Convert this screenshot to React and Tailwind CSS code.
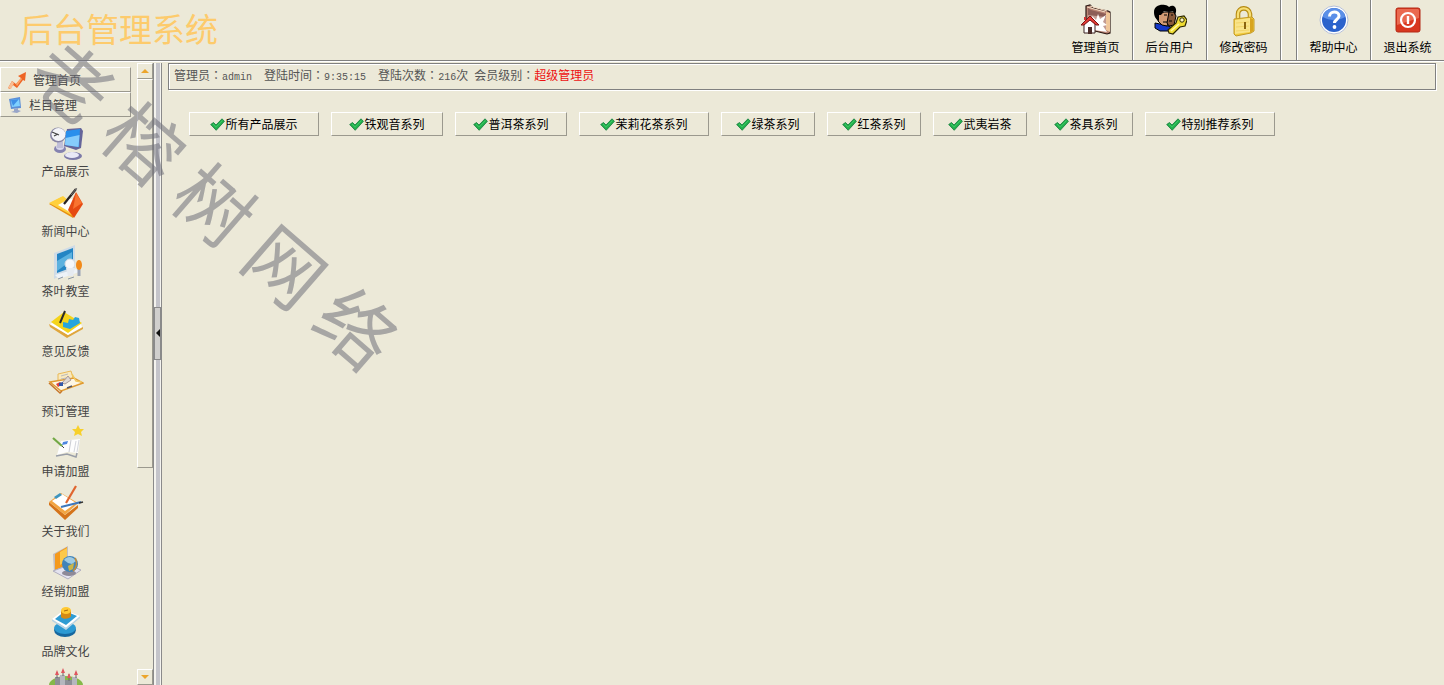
import React, { useState } from 'react';
import clsx from 'clsx';

const HomeFolderIcon = () => (
  <svg viewBox="0 0 34 34" className="w-[34px] h-[34px]">
    <path d="M7 3l4-1 3 3 15 3 2 1v21l-3 1-12-3L7 22z" fill="#b98474" stroke="#2b1712" strokeWidth="1.2" />
    <path d="M9 5l3 2 15 4v18L9 22z" fill="#8d5e57" />
    <path d="M9 12l18 2v14L9 22z" fill="#c39c93" />
    <path d="M27 9l4 1v19l-4-2z" fill="#f0c79a" />
    <path d="M8 4l18 5M11 3l17 5" stroke="#f4dcc4" />
    <path d="M14 20l-1-7 4 4 2-6 2 5 6-4-3 7 4 3-4 1 4 6-13-2z" fill="#fff" />
    <path d="M5 21v9h11v-9l-5-5z" fill="#fff" stroke="#3b2222" />
    <path d="M2 22l9-9 9 9h-3l-6-5-6 5z" fill="#e23b35" stroke="#7a1414" />
    <path d="M9 24h4v7H9z" fill="#4b2b28" />
    <path d="M5 14h2v3H5z" fill="#c33" />
  </svg>
);

const UserKeyIcon = () => (
  <svg viewBox="0 0 34 34" className="w-[34px] h-[34px]">
    <path d="M2 20l5 1 8 2 5 2v3H7l-5-3z" fill="#1438c8" stroke="#000" />
    <path d="M5 12l6-3 5 0 1 7-3 7-5-1-4-4z" fill="#d39c74" stroke="#000" />
    <path d="M16 9l5 0 2 4-2 9-5 1-2-3z" fill="#8a5a3a" stroke="#000" />
    <path d="M1 9c0-6 6-8 11-7 2 0 3 1 4 2 4-3 8 0 7 5l-1 3-2-4-4 1-5-1-3 4-2 0 0 6C2 16 1 12 1 9z" fill="#000" />
    <path d="M11 12h3M18 12h2M10 19l4 0M16 18h3" stroke="#000" strokeWidth="1.200" />
    <path d="M25 14l6-1 3 4-2 6-5 1-7 7-4-1-1-3 8-7z" fill="#efdc33" stroke="#2b2600" strokeWidth="1.2" />
    <path d="M18 28l8-7" stroke="#fff9a5" strokeWidth="1.5" />
    <circle cx="29" cy="17" r="2.2" fill="#fff8c0" stroke="#2b2600" />
  </svg>
);

const LockIcon = () => (
  <svg viewBox="0 0 34 34" className="w-[34px] h-[34px]">
    <path d="M11 17v-6c0-7 11-8 12 0v6" fill="none" stroke="#b58a12" strokeWidth="4.6" />
    <path d="M11 17v-6c0-7 11-8 12 0v6" fill="none" stroke="#f8df74" strokeWidth="2.4" />
    <path d="M7 16l18-2 2 2v12l-3 2-15 3-2-2z" fill="#f2cb3b" stroke="#c29a2a" />
    <path d="M8 17l15-2v14L8 31z" fill="#f9e48a" />
    <path d="M9 20l13-1M9 24l13-1M9 28l13-1" stroke="#f2d468" />
    <path d="M23 15l3 1v12l-3 2z" fill="#d8a520" />
    <path d="M17 19h2v7h-2z" fill="#8a6410" />
  </svg>
);

const HelpIcon = () => (
  <svg viewBox="0 0 34 34" className="w-[34px] h-[34px]">
    <circle cx="17" cy="17" r="14" fill="#fff" stroke="#b5bfd8" />
    <circle cx="17" cy="17" r="12" fill="#2b62cc" />
    <path d="M6 14a11 9 0 0 1 22 0c-6 4-16 4-22 0z" fill="#5b8fe8" />
    <path d="M12.5 13.500c0-6 9.500-6 9.500-.5 0 3.500-4.500 3.500-4.500 7" fill="none" stroke="#fff" strokeWidth="3" />
    <circle cx="17.500" cy="24" r="1.900" fill="#fff" />
  </svg>
);

const PowerIcon = () => (
  <svg viewBox="0 0 34 34" className="w-[34px] h-[34px]">
    <rect x="5" y="5" width="24" height="24" rx="2" fill="#d8371f" stroke="#b42a17" />
    <path d="M6 7l1-1h20l1 1v8L6 22z" fill="#ea6a50" />
    <circle cx="17" cy="17" r="7" fill="none" stroke="#fff" strokeWidth="2.2" />
    <path d="M17 13v8" stroke="#fff" strokeWidth="2.400" />
  </svg>
);

const ChartArrowIcon = () => (
  <svg viewBox="0 0 18 18" className="w-[18px] h-[18px]">
    <path d="M0 17l4-7 4 3 5-6-3-2 8-4-1 9-2-1-6 8-4-3-3 4z" fill="#ee6424" />
    <path d="M0 17l4-7 2 2-3 6z" fill="#f9bd92" />
    <path d="M8 13l5-6 1 1-5 7z" fill="#fba468" />
  </svg>
);

const MonitorIcon = () => (
  <svg viewBox="0 0 14 18" className="w-[14px] h-[18px]">
    <path d="M1 3l11-2 1 11-10 1z" fill="#5d8fd6" />
    <path d="M3 4l8-1 1 7-8 1z" fill="#7fd0ff" />
    <path d="M3 4l8-1-6 7z" fill="#3f8fe6" />
    <path d="M6 13l4-1v2l3 1-4 2-6-1 3-1z" fill="#98a5c8" />
  </svg>
);

const SatelliteIcon = () => (
  <svg viewBox="0 0 36 36" className="w-9 h-9">
    <ellipse cx="12" cy="24" rx="6" ry="4" fill="#8583b0" />
    <ellipse cx="12" cy="22" rx="4" ry="3" fill="#d8d8ea" />
    <ellipse cx="25" cy="31" rx="9" ry="4" fill="#7c7aa8" />
    <ellipse cx="24" cy="30" rx="7" ry="3" fill="#e9e9f6" />
    <path d="M9 15l6 0 0 8-6 0z" fill="#c0bfd8" />
    <ellipse cx="10" cy="10" rx="8" ry="7.500" fill="#8886a4" />
    <ellipse cx="10.500" cy="9.500" rx="7" ry="6.500" fill="#f4f4f8" />
    <path d="M11 10L4 7M6 11l4-2" fill="none" stroke="#444" strokeWidth="1.300" />
    <path d="M19 4l14-1 2 3-2 17-5 2-12-4z" fill="#65659a" />
    <path d="M18 6l14-2-1 18-14-2z" fill="#2a8fec" />
    <path d="M17.500 13l14-3-1 12-13.500-2z" fill="#86ccfb" />
  </svg>
);

const NewsIcon = () => (
  <svg viewBox="0 0 36 36" className="w-9 h-9">
    <path d="M1 19l24 14 1-4L14 12z" fill="#e69012" />
    <path d="M1 18l14-7 10 8 0 12z" fill="#ffd03c" />
    <path d="M10 20l11-6 7 0-3 15z" fill="#fff" />
    <path d="M28 7l7 12-9 14-6-8z" fill="#e64a12" />
    <path d="M28 8l6 10-9 6z" fill="#f97430" />
    <path d="M16 19L28 4" stroke="#292424" strokeWidth="2.200" />
    <path d="M23 10l6-7" stroke="#777" strokeWidth="1" />
  </svg>
);

const ClassroomIcon = () => (
  <svg viewBox="0 0 36 36" className="w-9 h-9">
    <path d="M6 8l21-8v23L6 34z" fill="#cfdbe6" />
    <path d="M9 9l16-6v19L9 28z" fill="#2485c4" />
    <path d="M9 16l15-9v8L9 26z" fill="#5bb1df" />
    <path d="M7 30l21-6 3 3-20 7z" fill="#eef3f8" />
    <ellipse cx="22" cy="19" rx="5" ry="5" fill="#f5f7fa" stroke="#d3dae2" />
    <path d="M18 23h9l-2 8h-5z" fill="#e6ebf1" />
    <path d="M31 23v8" stroke="#9aa3b5" strokeWidth="3" />
    <ellipse cx="31" cy="20" rx="3" ry="5" fill="#f28a1a" />
    <path d="M10 34l5-2M20 34l6-2" stroke="#8b97a4" />
  </svg>
);

const FeedbackIcon = () => (
  <svg viewBox="0 0 36 36" className="w-9 h-9">
    <path d="M1 19l19 11 15-8v2L19 33 2 22z" fill="#e0a63c" />
    <path d="M2 19l18 11 14-8-1-3-14 8-15-9z" fill="#fff" />
    <path d="M3 17L16 7l18 11-14 10z" fill="#f5d41a" />
    <path d="M15 22l0-5 5 1 1-4 4 1 2-3 4 1 1 5-10 6z" fill="#27a5dd" />
    <path d="M12 18l5-12" stroke="#2b2b2b" strokeWidth="2" />
  </svg>
);

const BookingIcon = () => (
  <svg viewBox="0 0 36 36" className="w-9 h-9">
    <path d="M10 9l13-3 3 10-16 6z" fill="#f9e9bd" stroke="#e9b958" />
    <path d="M2 17l11 9 22-8-9-5z" fill="#fdf6e4" stroke="#e09a30" strokeWidth="1.500" />
    <path d="M1 18l11 10 2-2" fill="none" stroke="#c7762a" strokeWidth="1.500" />
    <path d="M13 11l7-2M13 14l5-1" stroke="#bbb" />
    <path d="M14 18l6-7 3 4-6 4z" fill="#ded8d2" stroke="#a99" />
    <path d="M8 19l4-2 3 2-5 3z" fill="#e0403a" />
    <path d="M11 18l4-1 0 4-4 0z" fill="#3358a8" />
    <path d="M19 23l5-2" stroke="#556" strokeWidth="1.500" />
    <path d="M24 9l4 7 6 1" fill="none" stroke="#f0c860" strokeWidth="1.500" />
  </svg>
);

const JoinIcon = () => (
  <svg viewBox="0 0 36 36" className="w-9 h-9">
    <path d="M30 0l2 4 4 0-3 3 1 4-4-2-4 2 1-4-3-3 4 0z" fill="#f7d02b" />
    <path d="M13 16l9-1 10-1-2 14-11-1-10 3z" fill="#fdfdfd" />
    <path d="M23 15l-2 12" stroke="#c9cbd2" />
    <path d="M28 16l-2 11M31 15l-2 12" stroke="#d4d6dc" />
    <path d="M8 31l11-2 9 3 1-4" fill="none" stroke="#999ea8" strokeWidth="1.500" />
    <path d="M15 17l5-1-1 3-5 1z" fill="#4d86e0" />
    <path d="M5 13l9 8" stroke="#72a845" strokeWidth="2.200" />
    <path d="M14 21l2 2" stroke="#444" />
  </svg>
);

const AboutIcon = () => (
  <svg viewBox="0 0 36 36" className="w-9 h-9">
    <path d="M1 17l16 13 13-10v3L17 35 1 20z" fill="#d5741b" />
    <path d="M1 17L13 8l17 10-13 12z" fill="#f2a543" />
    <path d="M4 16l10-7 14 9-11 8z" fill="#fff" />
    <path d="M6 12l6-4 2 2-6 4z" fill="#3f95bd" />
    <path d="M18 18L28 1" stroke="#e0652e" strokeWidth="2.200" />
    <path d="M13 22l20-5" stroke="#3e78bd" strokeWidth="2" />
    <path d="M31 18l4-1" stroke="#333" strokeWidth="1.500" />
  </svg>
);

const DealerIcon = () => (
  <svg viewBox="0 0 36 36" className="w-9 h-9">
    <path d="M5 9L20 1v19L6 27z" fill="#c3bebe" />
    <path d="M7 9l12-7v18L7 25z" fill="#f59a1b" />
    <path d="M12 7l7-4v12l-7 5z" fill="#fcc94a" />
    <path d="M5 26l15 8 13-9-12-5z" fill="#e4e3ef" stroke="#b1afc0" />
    <ellipse cx="21" cy="28" rx="7" ry="3" fill="#8e8a98" />
    <circle cx="22" cy="19" r="8" fill="#4184ba" />
    <path d="M16 15c4-5 9-3 12 1l-4 3-4-1z" fill="#9fcbe2" />
    <path d="M20 21l6-3-1 6-4 2z" fill="#c9b548" />
    <path d="M27 13a10 10 0 0 1-2 13" fill="none" stroke="#c58d35" strokeWidth="1.500" />
  </svg>
);

const BrandIcon = () => (
  <svg viewBox="0 0 36 36" className="w-9 h-9">
    <ellipse cx="17" cy="25" rx="11" ry="7" fill="#17689f" />
    <ellipse cx="17" cy="23" rx="11" ry="6" fill="#2c9ad3" />
    <path d="M4 14l14 9 14-12v2L18 25 4 16z" fill="#b9d4e3" />
    <path d="M4 14L16 5l16 6-14 12z" fill="#fff" />
    <path d="M7 14l10-8 12 5-11 9z" fill="#2f9cd3" />
    <path d="M13 6v6c2 3 9 2 10-1V5z" fill="#d58a14" />
    <ellipse cx="18" cy="5.500" rx="5" ry="3.500" fill="#ffc933" />
    <path d="M16 6l4-1" stroke="#a86608" />
  </svg>
);

const CastleIcon = () => (
  <svg viewBox="0 0 36 36" className="w-9 h-9">
    <ellipse cx="18" cy="20" rx="17" ry="9" fill="#86b84a" />
    <path d="M7 12h5v3h12v-3h5v11l-11 5-11-5z" fill="#8d8f96" />
    <path d="M12 10h5v13h-5zM24 12h5v11h-5z" fill="#b5b7be" />
    <path d="M9 13V7M15 11V5M21 16V9M28 13V7" stroke="#666" />
    <path d="M7 10l2-5 2 5zM13 8l2-5 2 5zM19 13l2-5 2 5zM26 10l2-5 2 5z" fill="#e0555f" />
  </svg>
);

const CheckIcon = () => (
  <svg viewBox="0 0 15 13" className="w-[15px] h-[13px]">
    <path d="M.7 6.500l2.800-2L6 7 12 .8 14.400 3.300 6.200 12.300z" fill="#22b14c" stroke="#11793a" strokeWidth=".8" />
    <path d="M3 6l3 3.200L12.500 2.500" fill="none" stroke="#3fc768" strokeWidth="1" />
  </svg>
);

const toolbar = [
  { label: '管理首页', Icon: HomeFolderIcon },
  { label: '后台用户', Icon: UserKeyIcon },
  { label: '修改密码', Icon: LockIcon },
];

const toolbarEnd = [
  { label: '帮助中心', Icon: HelpIcon },
  { label: '退出系统', Icon: PowerIcon },
];

const menu = [
  { label: '产品展示', Icon: SatelliteIcon },
  { label: '新闻中心', Icon: NewsIcon },
  { label: '茶叶教室', Icon: ClassroomIcon },
  { label: '意见反馈', Icon: FeedbackIcon },
  { label: '预订管理', Icon: BookingIcon },
  { label: '申请加盟', Icon: JoinIcon },
  { label: '关于我们', Icon: AboutIcon },
  { label: '经销加盟', Icon: DealerIcon },
  { label: '品牌文化', Icon: BrandIcon },
  { label: '', Icon: CastleIcon },
];

const categories = [
  { label: '所有产品展示', width: 'w-[130px]' },
  { label: '铁观音系列', width: 'w-[112px]' },
  { label: '普洱茶系列', width: 'w-[112px]' },
  { label: '茉莉花茶系列', width: 'w-[130px]' },
  { label: '绿茶系列', width: 'w-[94px]' },
  { label: '红茶系列', width: 'w-[94px]' },
  { label: '武夷岩茶', width: 'w-[94px]' },
  { label: '茶具系列', width: 'w-[94px]' },
  { label: '特别推荐系列', width: 'w-[130px]' },
];

const raised = 'border border-t-white border-l-white border-r-[#9b998e] border-b-[#9b998e]';

const ToolbarLink = ({ label, Icon, last }) => (
  <a
    href="#"
    className={clsx(
      'flex flex-col items-center pt-[3px] text-black',
      last ? 'w-[73px]' : 'w-[74px] border-r border-[#808080] shadow-[1px_0_0_#fff]'
    )}
  >
    <Icon />
    <span className="leading-5">{label}</span>
  </a>
);

const SectionLink = ({ label, Icon }) => (
  <a href="#" className={`flex items-center gap-[7px] h-[25px] pl-[7px] ${raised}`}>
    <Icon />
    {label}
  </a>
);

// The TC face centres the full-width colon in its box
const Field = ({ label, value, unit }) => (
  <span className="flex items-baseline">
    {label}
    <span className="font-['Noto_Sans_CJK_TC',sans-serif]" lang="zh-TW">{'\uff1a'}</span>
    <span className="font-['Liberation_Mono',monospace] text-[10px]">{value}</span>
    {unit}
  </span>
);

const Arrow = ({ down }) => (
  <svg viewBox="0 0 8 4" className={clsx('w-2 h-1', down && 'rotate-180')}>
    <path d="M0 4l4-4 4 4z" fill="#eca52c" />
  </svg>
);

const App = () => {
  const [collapsed, setCollapsed] = useState(false);

  return (
    <div className="relative flex flex-col h-screen overflow-hidden bg-[#ece9d8] text-xs text-[#444] font-['Noto_Sans_CJK_SC',sans-serif]">
      <header className="flex justify-between shrink-0 h-[61px] border-b border-[#808080] shadow-[0_1px_0_#fff]">
        <h1 className="pl-5 pt-1 text-[33px] leading-[48px] text-[#fdcb6c]">后台管理系统</h1>
        <nav className="flex">
          {toolbar.map(item => (
            <ToolbarLink key={item.label} {...item} />
          ))}
          <div className="w-4 border-r border-[#808080] shadow-[1px_0_0_#fff]" />
          {toolbarEnd.map((item, i) => (
            <ToolbarLink key={item.label} {...item} last={i === 1} />
          ))}
        </nav>
      </header>

      <div className="flex flex-1 min-h-0 pt-0.5">
        {!collapsed && (
          <aside className="flex shrink-0">
            <div className="w-[137px] overflow-hidden pt-1 pr-1.5">
              <SectionLink label="管理首页" Icon={ChartArrowIcon} />
              <SectionLink label="栏目管理" Icon={MonitorIcon} />
              <ul className="pt-2">
                {menu.map(({ label, Icon }, i) => (
                  <li key={i}>
                    <a href="#" className="flex flex-col items-center h-[60px]">
                      <Icon />
                      <span className="leading-5">{label}</span>
                    </a>
                  </li>
                ))}
              </ul>
            </div>

            {/* Scrollbar */}
            <div className="flex flex-col w-4">
              <button aria-label="向上" className={`flex items-center justify-center shrink-0 h-4 ${raised}`}>
                <Arrow />
              </button>
              <div className="flex-1">
                <div className={`h-[66%] ${raised}`} />
              </div>
              <button aria-label="向下" className={`flex items-center justify-center shrink-0 h-4 ${raised}`}>
                <Arrow down />
              </button>
            </div>
          </aside>
        )}

        {/* Splitter */}
        <div className="flex flex-col shrink-0 w-[9px] border-x border-[#8a8a8a] bg-[#f4f3ee]">
          <div className="grow-3 w-1 mx-auto bg-[#c4c4ca]" />
          <button
            aria-label="折叠"
            onClick={() => setCollapsed(!collapsed)}
            className="flex items-center justify-end h-[53px] border border-[#8a8a8a] bg-[#d0cfcd]"
          >
            <svg viewBox="0 0 4 8" className="w-1 h-2">
              <path d="M4 0v8L0 4z" fill="#111" />
            </svg>
          </button>
          <div className="grow-4 w-1 mx-auto bg-[#c4c4ca]" />
        </div>

        <main className="flex-1 min-w-0 pl-1.5 pr-2">
          <div className="flex items-center gap-3 h-[27px] px-[5px] pb-0.5 border border-[#808080] shadow-[inset_1px_1px_0_#fff,1px_1px_0_#fff] text-[#555]">
            <Field label="管理员" value="admin" />
            <Field label="登陆时间" value="9:35:15" />
            <div className="flex gap-1.5">
              <Field label="登陆次数" value="216" unit="次" />
              <Field label="会员级别" unit={<span className="text-[#e11]">超级管理员</span>} />
            </div>
          </div>

          <div className="flex flex-wrap gap-3 pl-[21px] pt-[22px]">
            {categories.map(({ label, width }) => (
              <button
                key={label}
                className={`flex items-center justify-center h-6 text-black ${width} ${raised}`}
              >
                <CheckIcon />
                {label}
              </button>
            ))}
          </div>
        </main>
      </div>

      {/* Watermark */}
      <div className="absolute left-[217px] top-[202px] -translate-x-1/2 -translate-y-1/2 rotate-[41deg] flex gap-[18px] pointer-events-none text-[76px] leading-none text-[#70707a]/55">
        {['老', '榕', '树', '网', '络'].map(char => (
          <span key={char}>{char}</span>
        ))}
      </div>
    </div>
  );
};

export default App;
